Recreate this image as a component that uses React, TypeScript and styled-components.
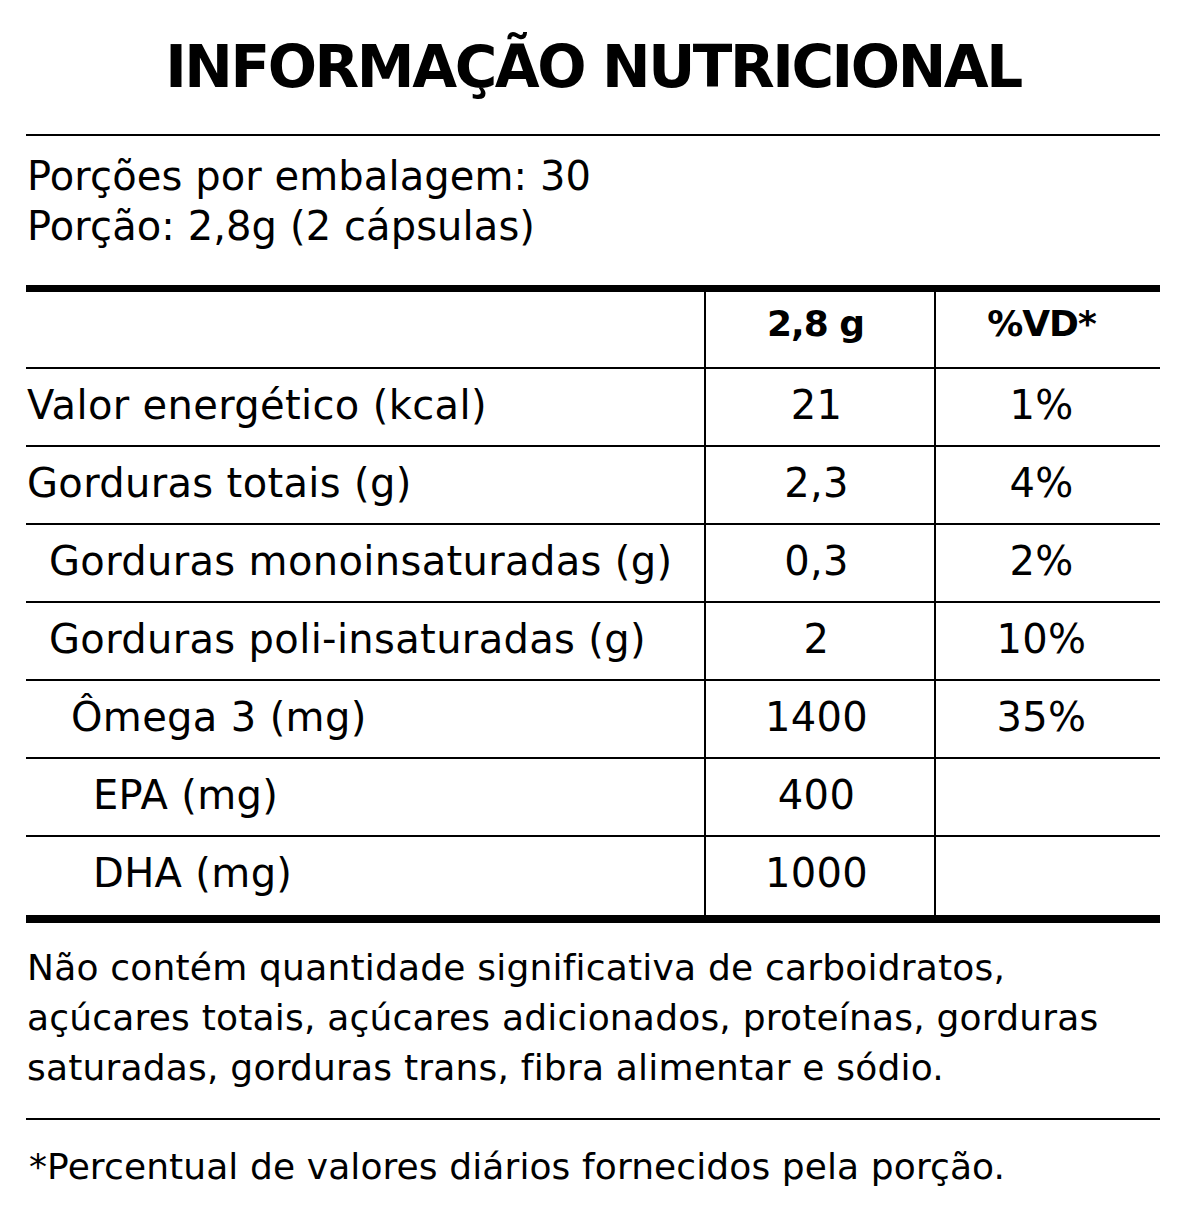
import React from "react";
import styled, { createGlobalStyle } from "styled-components";

const GlobalStyle = createGlobalStyle`
  html, body {
    margin: 0;
    padding: 0;
    background: #ffffff;
  }
  body {
    font-family: "DejaVu Sans", "Noto Sans", sans-serif;
    color: #000000;
  }
`;

const Page = styled.main`
  width: 1134px;
  padding: 0 28px 0 26px;
  background: #ffffff;
`;

const Title = styled.h1`
  margin: 0;
  padding-top: 39px;
  height: 95px;
  font-family: "DejaVu Sans", sans-serif;
  font-weight: 700;
  font-size: 58px;
  line-height: 56px;
  letter-spacing: -2.4px;
  text-align: center;
  border-bottom: 2px solid #000;
`;

const Serving = styled.section`
  padding: 15px 0 34px 1px;
  font-size: 40px;
  line-height: 50px;
  letter-spacing: 0.1px;
`;

const Line = styled.div`
  white-space: nowrap;
`;

const Table = styled.div`
  border-top: 7px solid #000;
  border-bottom: 8px solid #000;
`;

const Row = styled.div<{ $last?: boolean }>`
  display: grid;
  grid-template-columns: 680px 230px 1fr;
  height: 78px;
  box-sizing: border-box;
  border-bottom: ${(p) => (p.$last ? "none" : "2px solid #000")};
`;

const HeadRow = styled(Row)`
  height: 77px;
`;

const Cell = styled.div<{ $divider?: boolean; $align?: "left" | "center"; $indent?: number; $shift?: number }>`
  box-sizing: border-box;
  border-right: ${(p) => (p.$divider ? "2px solid #000" : "none")};
  text-align: ${(p) => p.$align ?? "center"};
  padding-left: ${(p) => 1 + (p.$indent ?? 0) * 22}px;
  padding-right: ${(p) => p.$shift ?? 0}px;
  padding-bottom: 4px;
  font-size: 40px;
  line-height: 72px;
  letter-spacing: 0.35px;
  white-space: nowrap;
`;

const HeadCell = styled(Cell)`
  font-weight: 700;
  font-size: 36px;
  line-height: 64px;
  letter-spacing: -1px;
  padding-bottom: 12px;
`;

const Notes = styled.p`
  margin: 0;
  padding: 20px 0 25px 1px;
  font-size: 36px;
  line-height: 50px;
  letter-spacing: 0.2px;
  border-bottom: 2px solid #000;
`;

const Footnote = styled.p`
  margin: 0;
  padding: 22px 0 30px 3px;
  font-size: 36px;
  line-height: 50px;
  letter-spacing: 0.1px;
`;

type Nutrient = { label: string; level: number; amount: string; dv: string };

const rows: Nutrient[] = [
  { label: "Valor energético (kcal)", level: 0, amount: "21", dv: "1%" },
  { label: "Gorduras totais (g)", level: 0, amount: "2,3", dv: "4%" },
  { label: "Gorduras monoinsaturadas (g)", level: 1, amount: "0,3", dv: "2%" },
  { label: "Gorduras poli-insaturadas (g)", level: 1, amount: "2", dv: "10%" },
  { label: "Ômega 3 (mg)", level: 2, amount: "1400", dv: "35%" },
  { label: "EPA (mg)", level: 3, amount: "400", dv: "" },
  { label: "DHA (mg)", level: 3, amount: "1000", dv: "" },
];

export default function App() {
  return (
    <>
      <GlobalStyle />
      <Page>
        <Title>INFORMAÇÃO NUTRICIONAL</Title>
        <Serving>
          <Line>Porções por embalagem: 30</Line>
          <Line>Porção: 2,8g (2 cápsulas)</Line>
        </Serving>
        <Table>
          <HeadRow>
            <HeadCell $divider $align="left" />
            <HeadCell $divider $shift={10}>2,8 g</HeadCell>
            <HeadCell $shift={14}>%VD*</HeadCell>
          </HeadRow>
          {rows.map((r, i) => (
            <Row key={r.label} $last={i === rows.length - 1}>
              <Cell $divider $align="left" $indent={r.level}>
                {r.label}
              </Cell>
              <Cell $divider $shift={8}>{r.amount}</Cell>
              <Cell $shift={14}>{r.dv}</Cell>
            </Row>
          ))}
        </Table>
        <Notes>
          Não contém quantidade significativa de carboidratos,
          <br />
          açúcares totais, açúcares adicionados, proteínas, gorduras
          <br />
          saturadas, gorduras trans, fibra alimentar e sódio.
        </Notes>
        <Footnote>*Percentual de valores diários fornecidos pela porção.</Footnote>
      </Page>
    </>
  );
}
